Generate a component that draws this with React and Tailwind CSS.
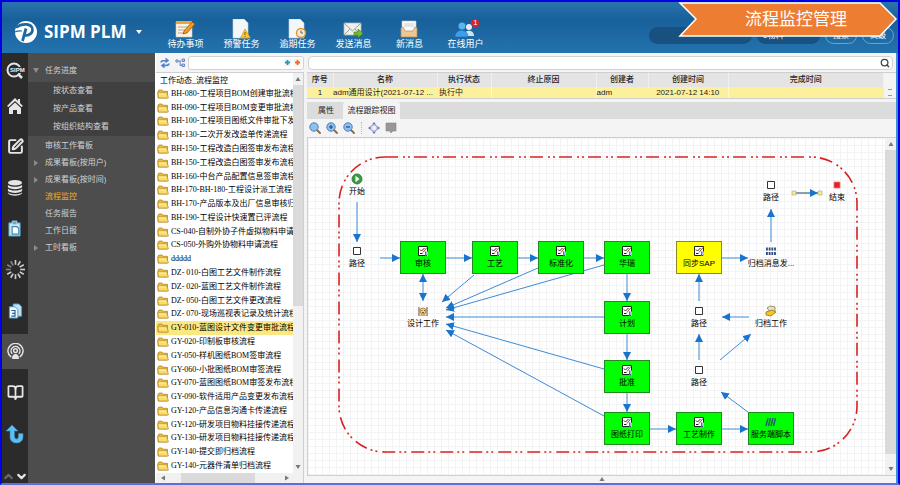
import React from 'react';
import clsx from 'clsx';
import { BookOpen, ChevronDown, ChevronUp, Search, SquarePen } from 'lucide-react';

const flows = [
  'BH-080-工程项目BOM创建审批流程',
  'BH-090-工程项目BOM变更审批流程',
  'BH-100-工程项目图纸文件审批下发',
  'BH-130-二次开发改造单传递流程',
  'BH-150-工程改造白图签审发布流程',
  'BH-150-工程改造白图签审发布流程',
  'BH-160-中台产品配置信息签审流程',
  'BH-170-BH-180-工程设计派工流程',
  'BH-170-产品版本及出厂信息审核归',
  'BH-190-工程设计快速置已评流程',
  'CS-040-自制外协子件虚拟物料申请',
  'CS-050-外购外协物料申请流程',
  'ddddd',
  'DZ- 010-白图工艺文件制作流程',
  'DZ- 020-蓝图工艺文件制作流程',
  'DZ- 050-白图工艺文件更改流程',
  'DZ- 070-现场巡视表记录及统计流程',
  'GY-010-蓝图设计文件变更审批流程',
  'GY-020-印制板审核流程',
  'GY-050-样机图纸BOM签审流程',
  'GY-060-小批图纸BOM审签流程',
  'GY-070-蓝图图纸BOM审签发布流程',
  'GY-090-软件适用产品变更发布流程',
  'GY-120-产品信息沟通卡传递流程',
  'GY-120-研发项目物料挂接传递流程',
  'GY-130-研发项目物料挂接传递流程',
  'GY-140-提交即归档流程',
  'GY-140-元器件清单归档流程',
];

const columns = [
  { title: '序号', width: 'w-[26px]' },
  { title: '名称', width: 'w-[104px]' },
  { title: '执行状态', width: 'w-[54px]' },
  { title: '终止原因', width: 'w-[105px]' },
  { title: '创建者', width: 'w-[52px]' },
  { title: '创建时间', width: 'w-[80px]' },
  { title: '完成时间', width: '' },
];

const nodes = [
  { x: 26, y: 31, icon: 'start', label: '开始' },
  { x: 26, y: 103, icon: 'route', label: '路径' },
  { x: 92, y: 103, icon: 'form', label: '审核', fill: 'green' },
  { x: 164, y: 103, icon: 'form', label: '工艺', fill: 'green' },
  { x: 230, y: 103, icon: 'form', label: '标准化', fill: 'green' },
  { x: 296, y: 103, icon: 'form', label: '华瑞', fill: 'green' },
  { x: 296, y: 163, icon: 'form', label: '计划', fill: 'green' },
  { x: 296, y: 222, icon: 'form', label: '批准', fill: 'green' },
  { x: 296, y: 274, icon: 'form', label: '图纸打印', fill: 'green' },
  { x: 368, y: 274, icon: 'form', label: '工艺制作', fill: 'green' },
  { x: 440, y: 274, icon: 'script', label: '服务端脚本', fill: 'green' },
  { x: 368, y: 103, icon: 'form', label: '同步SAP', fill: 'yellow' },
  { x: 92, y: 163, icon: 'design', label: '设计工作' },
  { x: 440, y: 37, icon: 'route', label: '路径' },
  { x: 506, y: 37, icon: 'stop', label: '结束' },
  { x: 440, y: 103, icon: 'binary', label: '归档消息发...' },
  { x: 368, y: 163, icon: 'route', label: '路径' },
  { x: 440, y: 163, icon: 'archive', label: '归档工作' },
  { x: 368, y: 222, icon: 'route', label: '路径' },
];

// x1, y1, x2, y2
const edges = [
  [49, 64, 49, 104],
  [72, 120, 92, 120],
  [138, 120, 164, 120],
  [210, 120, 230, 120],
  [276, 120, 296, 120],
  [319, 136, 319, 163],
  [319, 196, 319, 222],
  [319, 255, 319, 274],
  [342, 291, 368, 291],
  [414, 291, 440, 291],
  [440, 274, 413, 254],
  [412, 222, 443, 196],
  [441, 179, 414, 179],
  [391, 222, 391, 196],
  [391, 163, 391, 136],
  [414, 120, 440, 120],
  [463, 104, 463, 71],
  [166, 137, 134, 164],
  [230, 130, 138, 170],
  [296, 127, 138, 172],
  [296, 179, 138, 179],
  [296, 231, 138, 186],
  [296, 278, 138, 192],
];

const Folder = () => (
  <svg viewBox="0 0 12 10" className="h-[10px] w-[12px] shrink-0">
    <path d="M1 9V2l1-1h3l1 1.300h4.500V9z" fill="#e9bf45" stroke="#a87f1c" strokeWidth=".7" />
    <path d="M.7 3.800h9.300L11.400 9H1.600z" fill="#fbdc68" stroke="#b8892a" strokeWidth=".7" />
    <path d="M2 5h7" stroke="#fff3b8" strokeWidth=".9" />
  </svg>
);

const Logo = () => (
  <svg viewBox="0 0 24 24" className="size-[24px]">
    <circle cx="12" cy="12" r="11" fill="#fff" />
    <path d="M2 7.500C8 3 18 3 18.500 9.500c.2 4-4 6.500-8 6" fill="none" stroke="#1c689f" strokeWidth="2.600" />
    <path d="M12 8.500 8.500 21" stroke="#1c689f" strokeWidth="2.800" />
    <path d="M1 12c2-1 4-1.500 7-1" stroke="#1c689f" strokeWidth="1.200" fill="none" />
  </svg>
);

const Page = () => <path d="M2 0h11l4 4v15H2z" fill="#f4f6f8" stroke="#c9d3dc" strokeWidth=".6" />;

const topIcons = {
  todo: (
    <>
      <path d="M1 3h16v15H1z" fill="#fbf3e4" stroke="#d8c8ae" strokeWidth=".6" />
      <path d="M1 2h16v3H1z" fill="#f0a23c" />
      <path d="M3 8h10M3 11h9M3 14h7" stroke="#b3a894" />
      <path d="m8 15 1-3 8-9 3 2-8 9z" fill="#f39a1f" stroke="#875018" strokeWidth=".7" />
    </>
  ),
  warn: (
    <>
      <Page />
      <path d="m14 10 5.500 9h-10z" fill="#ffc928" stroke="#c98d11" strokeWidth=".6" />
      <path d="M14 13v3m0 1v1" stroke="#7a5208" />
    </>
  ),
  overdue: (
    <>
      <Page />
      <circle cx="14" cy="14" r="4.500" fill="#f5ead5" stroke="#e2952e" strokeWidth="1.400" />
      <path d="M14 11.500V14h2" fill="none" stroke="#555" strokeWidth=".9" />
    </>
  ),
  send: (
    <>
      <path d="M1 4h17v12H1z" fill="#edf0ec" stroke="#b9bdb5" strokeWidth=".7" />
      <path d="m1 4 8.500 8L18 4M1 16l6-6m11 6-6-6" fill="none" stroke="#91988d" strokeWidth=".9" />
      <path d="M11 13h4v-3l5 4.500-5 4.500v-3h-4z" fill="#75bd2e" stroke="#447b15" strokeWidth=".6" />
    </>
  ),
  inbox: (
    <>
      <path d="M3 2h14v11H3z" fill="#fafafa" stroke="#c4c4c4" strokeWidth=".6" />
      <path d="M5 5h10M5 7h10" stroke="#cfcfcf" />
      <path d="m2 9 2-1 2 4h8l2-4 2 1v9H2z" fill="#ecc795" stroke="#b98c55" strokeWidth=".7" />
    </>
  ),
  online: (
    <>
      <circle cx="14" cy="8" r="3" fill="#e3edf5" />
      <path d="M9 17c0-7 10-7 10 0z" fill="#d3e2ef" />
      <circle cx="7" cy="7" r="3.500" fill="#58b4f2" />
      <path d="M0 18c0-9 13-9 13 0z" fill="#3c9ee8" stroke="#1766a5" strokeWidth=".5" />
    </>
  ),
};

const shortcuts = [
  { icon: 'todo', label: '待办事项' },
  { icon: 'warn', label: '预警任务' },
  { icon: 'overdue', label: '逾期任务' },
  { icon: 'send', label: '发送消息' },
  { icon: 'inbox', label: '新消息' },
  { icon: 'online', label: '在线用户', badge: 1 },
];

const Header = () => (
  <header className="relative flex h-[51px] shrink-0 items-start bg-linear-to-b from-[#2973ad] via-[#18609a] via-35% to-[#2473ae] text-white">
    <button type="button" className="mt-[18px] ml-3 flex items-center">
      <Logo />
      <span className="ml-[6px] font-['Open_Sans',sans-serif] text-[17px] leading-6 font-bold">SIPM PLM</span>
      <svg viewBox="0 0 6 4" className="ml-[10px] h-1 w-[6px]"><path d="M0 0h6L3 4z" fill="#fff" /></svg>
    </button>
    <nav className="mt-[17px] ml-[15px] flex">
      {shortcuts.map((s) => (
        <button key={s.label} type="button" className="relative flex w-[56px] flex-col items-center">
          <svg viewBox="0 0 20 20" className="size-5">{topIcons[s.icon]}</svg>
          <span className="text-[9px] leading-[11px]">{s.label}</span>
          {s.badge && (
            <span className="absolute top-0 right-[14px] size-[8px] rounded-full bg-[#e0202c] text-center text-[7px] leading-[8px]">{s.badge}</span>
          )}
        </button>
      ))}
    </nav>
    <form className="mt-[25px] mr-1 ml-auto flex gap-[5px] text-[8px]">
      <input type="text" aria-label="搜索内容" className="h-[17px] w-[103px] rounded-full bg-[#18507f]" />
      <select aria-label="类型" className="h-[17px] w-[63px] appearance-none rounded-full bg-[#18507f] px-[6px]">
        <option>e物料</option>
      </select>
      <button type="button" className="h-[17px] w-8 rounded-full border border-[#6fa3cb]">搜索</button>
      <button type="button" className="h-[17px] w-8 rounded-full border border-[#6fa3cb]">高级</button>
    </form>
    <div className="absolute top-0 right-0 h-[36px] w-[220px]">
      <svg viewBox="0 0 220 36" className="absolute inset-0 size-full">
        <path d="M2 1h200l16 16-16 17H2l16-17z" fill="#ed7d31" stroke="#fff" strokeWidth="1.500" />
      </svg>
      <h1 className="relative pl-4 text-center text-[17px] leading-[35px]">流程监控管理</h1>
    </div>
  </header>
);

const railIcons = [
  {
    name: '搜索',
    icon: (
      <svg viewBox="0 0 20 18" className="h-[18px] w-5">
        <circle cx="9" cy="8" r="6.500" fill="none" stroke="#e6e6e6" strokeWidth="2" />
        <path d="m13 12 4 4" stroke="#e6e6e6" strokeWidth="2.500" />
        <path d="M6 5h14v6H6z" fill="#2b2b2b" />
        <text x="5" y="10" fontSize="6" fontWeight="700" fill="#f2f2f2">SIPM</text>
      </svg>
    ),
  },
  {
    name: '首页',
    icon: (
      <svg viewBox="0 0 18 18" className="size-[18px]" fill="#e6e6e6">
        <path d="M9 1 1 9l1.500 1L9 4l6.500 6L17 9l-3-3V2h-2v2z" />
        <path d="m9 5.500-6 5.500v6h4v-4h4v4h4v-6z" />
      </svg>
    ),
  },
  { name: '编辑', icon: <SquarePen className="size-[17px]" strokeWidth={2.8} /> },
  {
    name: '数据',
    icon: (
      <svg viewBox="0 0 16 18" className="h-[17px] w-4" fill="#e6e6e6">
        <ellipse cx="8" cy="4" rx="7.500" ry="3" />
        <path d="M.5 6c2 3 13 3 15 0v2.500c-2 3-13 3-15 0zM.5 10c2 3 13 3 15 0v2.500c-2 3-13 3-15 0zM.5 14c2 3 13 3 15 0v1c-2 3.500-13 3.500-15 0z" />
      </svg>
    ),
  },
  {
    name: '文档',
    icon: (
      <svg viewBox="0 0 14 18" className="h-[17px] w-[14px]">
        <path d="M.5 3h12v14H.5z" fill="#c5e4f4" stroke="#4d8fb5" />
        <path d="M4 1h5v4H4z" fill="#67a9cc" stroke="#e8f6ff" strokeWidth=".6" />
        <path d="M4 7h5l2 2v6H4z" fill="#fff" stroke="#3d88b5" strokeWidth="1.200" />
      </svg>
    ),
  },
  {
    name: '进程',
    icon: (
      <svg viewBox="0 0 22 22" className="size-[21px]" stroke="#cfcfcf" strokeWidth="1.700">
        {[0, 30, 60, 90, 120, 150, 180, 210, 240, 270, 300, 330].map((a) => (
          <path key={a} d="M11 1v5" transform={`rotate(${a} 11 11)`} opacity={a > 250 ? 0.55 : 1} />
        ))}
      </svg>
    ),
  },
  {
    name: '图档',
    icon: (
      <svg viewBox="0 0 15 17" className="h-4 w-[15px]">
        <path d="M5 1h6l3 3v10H5z" fill="#bfe2f5" stroke="#4c9bc6" />
        <path d="M1 4h6l3 3v9H1z" fill="#f0f9ff" stroke="#4c9bc6" />
        <path d="M3 8h4v3H4h3v3H3" fill="none" stroke="#26638b" strokeWidth="1.200" />
      </svg>
    ),
  },
  {
    name: '监控',
    active: true,
    icon: (
      <svg viewBox="0 0 18 18" className="size-[17px]" fill="none" stroke="#e6e6e6" strokeWidth="1.500">
        <path d="M4.500 15a8 8 0 1 1 9 0" />
        <path d="M5.500 11.500a4.700 4.700 0 1 1 7 0" />
        <circle cx="9" cy="8" r="2" />
        <path d="M5.500 17c-1-7 8-7 7 0z" fill="#e6e6e6" stroke="none" />
      </svg>
    ),
  },
  { name: '手册', icon: <BookOpen className="size-[17px]" strokeWidth={2.5} /> },
  {
    name: '返回',
    icon: (
      <svg viewBox="0 0 18 20" className="h-5 w-[18px]">
        <path d="m6 1 6 6H8.500v5c0 4 4 4 4 0V9.500H17V13c0 8-13 8-13 0V7H0z" fill="#5fbdf0" stroke="#2c87bd" strokeWidth=".6" />
      </svg>
    ),
  },
];

const Rail = () => (
  <aside className="flex w-[26px] shrink-0 flex-col bg-[#2b2b2b] text-[#e6e6e6]">
    {railIcons.map((r, i) => (
      <button
        key={r.name}
        type="button"
        aria-label={r.name}
        className={clsx('flex h-[35px] w-full shrink-0 items-center justify-center', i > 1 && 'mt-[6px]', r.active && 'bg-[#4d4d4d]')}
      >
        {r.icon}
      </button>
    ))}
    <div className="mt-auto flex justify-center">
      <button type="button" aria-label="向上" className="text-[#666]"><ChevronUp className="size-[13px]" strokeWidth={4} /></button>
      <button type="button" aria-label="向下"><ChevronDown className="size-[13px]" strokeWidth={4} /></button>
    </div>
  </aside>
);

const menu = [
  { label: '审核工作看板' },
  { label: '成果看板(按用户)', more: true },
  { label: '成果看板(按时间)', more: true },
  { label: '流程监控', active: true },
  { label: '任务报告' },
  { label: '工作日报' },
  { label: '工时看板', more: true },
];

const Menu = () => (
  <nav className="w-[127px] shrink-0 bg-[#4d4d4d] text-[8px] text-[#d2d2d2]">
    <button type="button" className="flex h-[29px] w-full items-center pt-[6px] pl-[5px]">
      <svg viewBox="0 0 6 5" className="h-[5px] w-[6px]"><path d="M0 0h6L3 5z" fill="#8b8b8b" /></svg>
      <span className="ml-[6px]">任务进度</span>
    </button>
    <ul className="bg-[#404040]">
      {['按状态查看', '按产品查看', '按组织结构查看'].map((t) => (
        <li key={t}><a href="#" className="flex h-[18px] items-center pl-[25px]">{t}</a></li>
      ))}
    </ul>
    <ul className="pt-px">
      {menu.map((m) => (
        <li key={m.label}>
          <a href="#" className={clsx('flex h-[17px] items-center pl-[5px]', m.active && 'text-[#f2ae1d]')}>
            <svg viewBox="0 0 6 6" className="size-[6px]">{m.more && <path d="M1 0v6l4-3z" fill="#8b8b8b" />}</svg>
            <span className="ml-[6px]">{m.label}</span>
          </a>
        </li>
      ))}
    </ul>
  </nav>
);

const Arrow = ({ dir }) => (
  <svg viewBox="0 0 6 6" className={clsx('size-[6px] shrink-0', dir === 'down' && 'rotate-180', dir === 'left' && '-rotate-90', dir === 'right' && 'rotate-90')}>
    <path d="M3 1 5.500 5h-5z" fill="#777" />
  </svg>
);

const FlowList = () => (
  <section className="flex w-[149px] shrink-0 flex-col border-l border-white bg-[#f4f4f6]">
    <div className="flex h-[19px] shrink-0 items-center pl-[4px]">
      <button type="button" aria-label="刷新">
        <svg viewBox="0 0 10 10" className="size-[10px]" fill="none" stroke="#4a86cf" strokeWidth="1.600">
          <path d="M1 4.500C1 2.500 3 2.500 7 2.500M5.500.5l2.500 2-2.500 2M9 5.500c0 2-2 2-6 2M4.500 5.500 2 7.500l2.500 2" />
        </svg>
      </button>
      <button type="button" aria-label="层级" className="ml-[5px]">
        <svg viewBox="0 0 11 10" className="h-[10px] w-[11px]" fill="#b9cdf0" stroke="#5573b8" strokeWidth=".8">
          <circle cx="2" cy="3" r="1.300" /><path d="M7 1h2.500v2.500H7zM7 6h2.500v2.500H7zM3.500 3H6M5 3v4.500h2" />
        </svg>
      </button>
      <div className="ml-[2px] flex h-[14px] min-w-0 flex-1 items-center gap-[3px] rounded-[3px] border border-[#d2d2d2] bg-white pr-[2px]">
        <input type="text" aria-label="过滤" className="min-w-0 flex-1 text-[8px] outline-none" />
        {['text-[#2a93b8]', 'text-[#e86a2a]'].map((c, i) => (
          <button key={c} type="button" aria-label={i ? '收起' : '展开'} className={c}>
            <svg viewBox="0 0 7 7" className="size-[7px]"><path d="M.3.3h6.400v6.400H.3z" fill="#fff" stroke="#ddd" strokeWidth=".5" /><path d="M3.500 1v5M1 3.500h5" stroke="currentColor" strokeWidth="1.800" /></svg>
          </button>
        ))}
      </div>
    </div>
    <div className="flex min-h-0 flex-1 border-t border-r border-[#cfcfcf] bg-white">
      <div className="flex min-w-0 flex-1 flex-col font-['Liberation_Serif','Noto_Sans_CJK_SC',serif] text-[8px] leading-[12px] text-black">
        <h2 className="h-[14px] shrink-0 pl-[4px] leading-[15px]">工作动态_流程监控</h2>
        <ul className="flex min-h-0 flex-1 flex-col">
          {flows.map((f, i) => (
            <li key={i} className={clsx('flex min-h-0 flex-1 items-center', f.startsWith('GY-010') && 'bg-[#fbe883]')}>
              <button type="button" className="flex w-full items-center gap-[2px] pl-px whitespace-nowrap">
                <Folder />
                {f}
              </button>
            </li>
          ))}
        </ul>
      </div>
      <div className="relative flex w-[10px] shrink-0 flex-col items-center bg-[#f1f1f1] py-[3px]">
        <Arrow />
        <div className="mt-[3px] h-[221px] w-full bg-[#dadada]" />
        <span className="mt-auto"><Arrow dir="down" /></span>
      </div>
    </div>
    <div className="flex h-[10px] shrink-0 items-center border-r border-[#cfcfcf] bg-[#f1f1f1] pr-[13px] pl-[4px]">
      <Arrow dir="left" />
      <div className="ml-[15px] h-full w-[74px] bg-[#dadada]" />
      <span className="ml-auto flex"><Arrow dir="right" /></span>
    </div>
  </section>
);

const InstanceTable = () => (
  <div className="flex shrink-0 border-t border-b border-[#cfcfcf]">
    <table className="min-w-0 flex-1 table-fixed border-collapse text-[8px] text-[#222]">
      <thead>
        <tr className="h-[14px] bg-[#e4e4e4]">
          {columns.map((c) => (
            <th key={c.title} className={clsx('border-r border-[#f0f0f0] p-0 leading-[14px] font-medium', c.width)}>{c.title}</th>
          ))}
        </tr>
      </thead>
      <tbody>
        <tr className="h-[11px] bg-[#fdf09c] leading-[11px] whitespace-nowrap">
          <td className="p-0 text-center">1</td>
          <td className="p-0">adm通用设计(2021-07-12 ...</td>
          <td className="p-0 pl-[2px]">执行中</td>
          <td className="border-x border-[#fff8d0] p-0" />
          <td className="p-0">adm</td>
          <td className="border-r border-[#fff8d0] p-0 text-center">2021-07-12 14:10</td>
          <td className="p-0" />
        </tr>
      </tbody>
    </table>
    <div className="flex w-[12px] shrink-0 items-end justify-center bg-[#f4f4f4] pb-[2px]">
      <svg viewBox="0 0 4 7" className="h-[7px] w-1" stroke="#999"><path d="M0 .5h4M0 6.500h4" /></svg>
    </div>
  </div>
);

const Lens = ({ sign }) => (
  <svg viewBox="0 0 12 12" className="size-[12px]">
    <path d="m8 8 3 3" stroke="#8d6b39" strokeWidth="1.800" strokeLinecap="round" />
    <circle cx="5" cy="5" r="4.200" fill="#8fc1ee" stroke="#4c7fb8" />
    <path d={sign} stroke="#1e4e86" strokeWidth="1.200" />
  </svg>
);

const CanvasTools = () => (
  <div className="flex h-[18px] shrink-0 items-center bg-[#f4f4f4] pl-[2px]">
    <button type="button" aria-label="实际大小" className="mr-[5px]"><Lens sign="" /></button>
    <button type="button" aria-label="放大" className="mr-[5px]"><Lens sign="M3 5h4M5 3v4" /></button>
    <button type="button" aria-label="缩小"><Lens sign="M3 5h4" /></button>
    <span className="mx-[6px] h-[12px] border-l border-dotted border-[#bbb]" />
    <button type="button" aria-label="定位">
      <svg viewBox="0 0 12 12" className="size-[12px]">
        <path d="M6 0 8 2.500H4zM6 12 4 9.500h4zM0 6l2.500-2v4zM12 6 9.500 8V4z" fill="#6b70c4" />
        <circle cx="6" cy="6" r="3.200" fill="#ececf4" stroke="#999bc0" />
      </svg>
    </button>
    <button type="button" aria-label="批注" className="ml-[5px]">
      <svg viewBox="0 0 12 12" className="size-[12px]"><path d="M1 1h10v8H8l-2 2-1-2H1z" fill="#979797" stroke="#858585" strokeWidth=".6" /></svg>
    </button>
  </div>
);

const nodeIcons = {
  start: (
    <>
      <circle cx="6" cy="6" r="5" fill="#3b9a40" stroke="#237a2a" strokeWidth=".8" />
      <path d="M4.500 2.800 8.500 6 4.500 9.200z" fill="#fff" />
    </>
  ),
  route: <path d="M2.500 2.500h7v7h-7z" fill="#fff" stroke="#333" />,
  stop: <path d="M3 3h6v6H3z" fill="#e5202b" stroke="#f0777c" strokeWidth=".8" />,
  form: (
    <>
      <path d="M1.500 1.500h9v9h-9z" fill="#fff" stroke="#222" />
      <path d="m3 4.500 1.500 1.500L7.500 3M3 8.500h2.500" fill="none" stroke="#222" />
      <path d="M6 7.500 10 2.500" stroke="#a34b28" />
      <path d="M8 6.500h1.500V11H8z" fill="#3f72c9" />
      <path d="M10 6.500h1V11h-1z" fill="#a9c6f5" />
    </>
  ),
  script: <path d="M1 10 3 2M3.500 10l2-8M6 10l2-8M8.500 10l2-8" stroke="#20606b" strokeWidth="1.500" />,
  binary: <path d="M1 4h10M1 8.500h10" stroke="#2d4680" strokeWidth="3.200" strokeDasharray="1.800 .9" />,
  design: (
    <>
      <path d="M2 2v9M10 2v9" stroke="#7a6a55" strokeWidth="1.200" />
      <circle cx="6" cy="6" r="3" fill="#f7cf8d" stroke="#a3701f" strokeWidth=".8" />
      <path d="M3 11c0-3 6-3 6 0z" fill="#e8a94f" />
      <path d="M4.500 5.500h1M7 5.500h1M5 7.500h2" stroke="#5b3a0e" strokeWidth=".8" />
    </>
  ),
  archive: (
    <>
      <path d="M2 3 5 1l5 1v4L6 8z" fill="#e9e0c8" stroke="#8d7a4c" strokeWidth=".8" />
      <path d="m1 7 6-2 4 2-5 4-5-1z" fill="#f3c624" stroke="#937211" strokeWidth=".8" />
    </>
  ),
};

const FlowNode = ({ x, y, icon, label, fill }) => (
  <div
    className={clsx(
      'absolute flex h-[33px] w-[46px] flex-col items-center border pt-[3px] text-[8px] leading-[14px] whitespace-nowrap text-black',
      fill === 'green' && 'border-[#1f8a1f] bg-[#00ff00]',
      fill === 'yellow' && 'border-[#8a8a1f] bg-[#ffff00]',
      !fill && 'border-transparent',
    )}
    style={{ left: x, top: y }}
  >
    <svg viewBox="0 0 12 12" className="size-[12px] shrink-0">{nodeIcons[icon]}</svg>
    {label}
  </div>
);

const Canvas = () => (
  <div className="relative min-w-0 flex-1 overflow-hidden border-l border-[#cfcfcf] bg-white">
    <svg className="absolute inset-0 size-full">
      <defs>
        <pattern id="grid" width="7" height="7" patternUnits="userSpaceOnUse">
          <path d="M.5 0v7M0 .5h7" stroke="#f3f3f3" />
        </pattern>
        <marker id="head" viewBox="0 0 8 8" refX="8" refY="4" markerWidth="8" markerHeight="8" orient="auto-start-reverse" markerUnits="userSpaceOnUse">
          <path d="M0 0 8 4 0 8z" fill="#1874cd" />
        </marker>
      </defs>
      <rect width="100%" height="100%" fill="url(#grid)" />
      <rect x="31" y="19" width="518" height="295" rx="46" fill="none" stroke="#d92020" strokeWidth="1.600" strokeDasharray="13 5 2 3 2 4" />
      {edges.map(([x1, y1, x2, y2], i) => (
        <line key={i} x1={x1} y1={y1} x2={x2} y2={y2} stroke="#3d8bd6" markerEnd="url(#head)" />
      ))}
      <line x1="115" y1="136" x2="115" y2="163" stroke="#3d8bd6" markerStart="url(#head)" markerEnd="url(#head)" />
      <line x1="487" y1="55" x2="510" y2="55" stroke="#173f6b" markerEnd="url(#head)" />
      <path d="M484 53h4v4h-4zM510 53h4v4h-4z" fill="#f3e9a0" stroke="#b5a95c" strokeWidth=".6" />
    </svg>
    {nodes.map((n) => <FlowNode key={`${n.x}-${n.y}`} {...n} />)}
  </div>
);

const Workspace = () => (
  <main className="flex min-w-0 flex-1 flex-col bg-[#f4f4f4] pl-[3px]">
    <div className="flex h-[19px] shrink-0 items-center pr-[3px] pl-px">
      <div className="flex h-[14px] flex-1 items-center rounded-[4px] border border-[#d2d2d2] bg-white pr-[2px]">
        <input type="text" aria-label="查询" className="min-w-0 flex-1 pl-1 text-[8px] outline-none" />
        <button type="button" aria-label="查询"><Search className="size-[10px] text-[#444]" strokeWidth={3} /></button>
      </div>
    </div>
    <InstanceTable />
    <div role="tablist" className="mt-[3px] flex h-[17px] shrink-0 items-stretch bg-[#dcdcdc] pl-[2px] text-[8px] text-[#222]">
      <button type="button" role="tab" aria-selected="false" className="w-[34px]">属性</button>
      <button type="button" role="tab" aria-selected="true" className="w-[57px] rounded-t-[3px] bg-[#f4f4f4]">流程跟踪视图</button>
    </div>
    <CanvasTools />
    <div className="flex min-h-0 flex-1 border-y border-[#cfcfcf]">
      <Canvas />
      <div className="flex w-[11px] shrink-0 flex-col items-center bg-[#f1f1f1] py-[3px]">
        <Arrow />
        <div className="mt-[3px] mb-3 w-full flex-1 bg-[#dadada]" />
        <Arrow dir="down" />
      </div>
    </div>
    <div className="flex h-[7px] shrink-0 justify-center"><Arrow /></div>
  </main>
);

const App = () => (
  <div className="flex h-screen flex-col overflow-hidden border-2 border-[#0000e6] border-b-[#5a6fe0] font-['Liberation_Sans','Noto_Sans_CJK_SC',sans-serif]">
    <Header />
    <div className="flex min-h-0 flex-1 border-r-2 border-[#3f8fd0]">
      <Rail />
      <Menu />
      <FlowList />
      <Workspace />
    </div>
  </div>
);

export default App;
